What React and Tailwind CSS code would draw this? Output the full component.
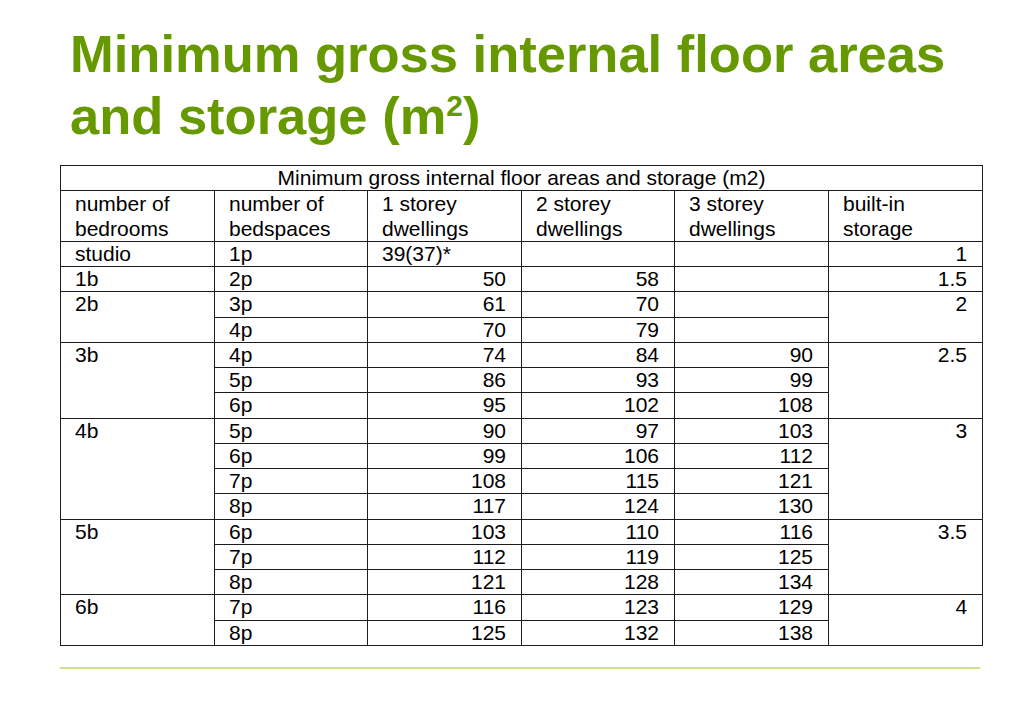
const rows = [
  { bed: "studio", span: 1, sp: "1p", s1: "39(37)*", s1Left: true, s2: "", s3: "", st: "1", stSpan: 1 },
  { bed: "1b", span: 1, sp: "2p", s1: "50", s2: "58", s3: "", st: "1.5", stSpan: 1 },
  { bed: "2b", span: 2, sp: "3p", s1: "61", s2: "70", s3: "", st: "2", stSpan: 2 },
  { sp: "4p", s1: "70", s2: "79", s3: "" },
  { bed: "3b", span: 3, sp: "4p", s1: "74", s2: "84", s3: "90", st: "2.5", stSpan: 3 },
  { sp: "5p", s1: "86", s2: "93", s3: "99" },
  { sp: "6p", s1: "95", s2: "102", s3: "108" },
  { bed: "4b", span: 4, sp: "5p", s1: "90", s2: "97", s3: "103", st: "3", stSpan: 4 },
  { sp: "6p", s1: "99", s2: "106", s3: "112" },
  { sp: "7p", s1: "108", s2: "115", s3: "121" },
  { sp: "8p", s1: "117", s2: "124", s3: "130" },
  { bed: "5b", span: 3, sp: "6p", s1: "103", s2: "110", s3: "116", st: "3.5", stSpan: 3 },
  { sp: "7p", s1: "112", s2: "119", s3: "125" },
  { sp: "8p", s1: "121", s2: "128", s3: "134" },
  { bed: "6b", span: 2, sp: "7p", s1: "116", s2: "123", s3: "129", st: "4", stSpan: 2 },
  { sp: "8p", s1: "125", s2: "132", s3: "138" },
];

const cell = "border border-[#1c1c1c] align-top p-0";
const left = `${cell} pl-[14px] text-left`;
const right = `${cell} pr-[15px] text-right`;

export default function App() {
  return (
    <div className="w-[1024px] h-[709px] bg-white font-['Liberation_Sans',Arial,sans-serif] overflow-hidden">
      <h1 className="pl-[70px] pt-[23px] text-[52.5px] leading-[62px] font-bold text-[#669900]">
        Minimum gross internal floor areas
        <br />
        and storage (m<sup className="text-[30px] !top-[-18px]">2</sup>)
      </h1>

      <table className="ml-[60px] mt-[18px] w-[922px] table-fixed border-collapse text-[21px] leading-[24.25px] text-black">
        <colgroup>
          <col className="w-[154px]" />
          <col className="w-[153px]" />
          <col className="w-[154px]" />
          <col className="w-[153px]" />
          <col className="w-[154px]" />
          <col className="w-[154px]" />
        </colgroup>
        <tbody>
          <tr>
            <td colSpan={6} className={`${cell} text-center`}>
              Minimum gross internal floor areas and storage (m2)
            </td>
          </tr>
          <tr>
            <td className={`${left} pt-[1px]`}>number of<br />bedrooms</td>
            <td className={`${left} pt-[1px]`}>number of<br />bedspaces</td>
            <td className={`${left} pt-[1px]`}>1 storey<br />dwellings</td>
            <td className={`${left} pt-[1px]`}>2 storey<br />dwellings</td>
            <td className={`${left} pt-[1px]`}>3 storey<br />dwellings</td>
            <td className={`${left} pt-[1px]`}>built-in<br />storage</td>
          </tr>
          {rows.map((r, i) => (
            <tr key={i}>
              {r.bed && (
                <td rowSpan={r.span} className={left}>
                  {r.bed}
                </td>
              )}
              <td className={left}>{r.sp}</td>
              <td className={r.s1Left ? left : right}>{r.s1}</td>
              <td className={right}>{r.s2}</td>
              <td className={right}>{r.s3}</td>
              {r.st && (
                <td rowSpan={r.stSpan} className={right}>
                  {r.st}
                </td>
              )}
            </tr>
          ))}
        </tbody>
      </table>

      <div className="ml-[60px] mt-[21px] w-[920px] h-[2px] bg-[#cde08c]" />
    </div>
  );
}
